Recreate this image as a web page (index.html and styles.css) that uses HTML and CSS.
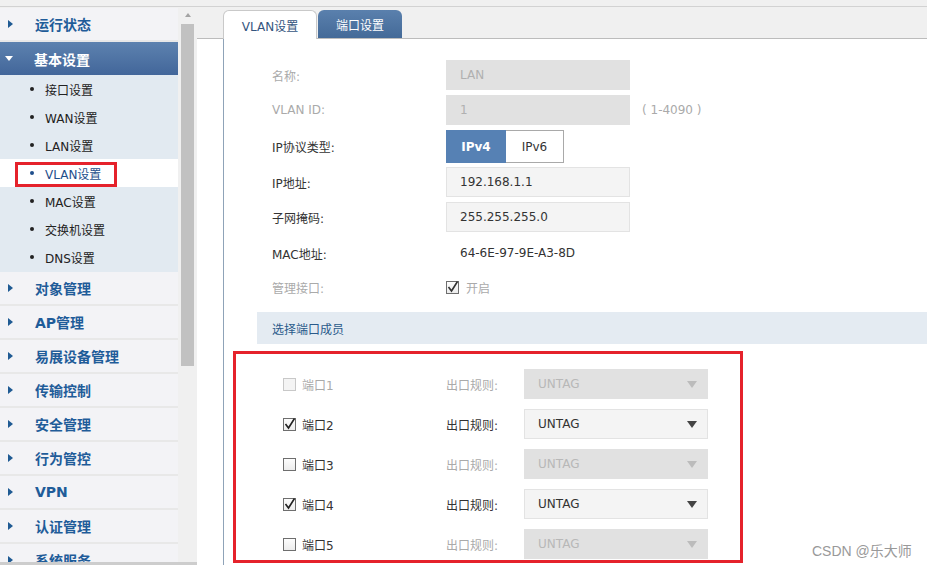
FILE: index.html
```html
<!DOCTYPE html>
<html lang="zh-CN">
<head>
<meta charset="utf-8">
<title>VLAN设置</title>
<link rel="stylesheet" href="styles.css">
</head>
<body>
<div class="topbar"></div>
<div class="frame">
  <nav class="sidebar">
    <div class="menu-item"><span class="tri-r"></span>运行状态</div>
    <div class="menu-head"><span class="tri-d"></span>基本设置</div>
    <ul class="submenu">
      <li><span class="dot"></span>接口设置</li>
      <li><span class="dot"></span>WAN设置</li>
      <li><span class="dot"></span>LAN设置</li>
      <li class="cur"><span class="dot"></span>VLAN设置</li>
      <li><span class="dot"></span>MAC设置</li>
      <li><span class="dot"></span>交换机设置</li>
      <li><span class="dot"></span>DNS设置</li>
    </ul>
    <div class="menu-item"><span class="tri-r"></span>对象管理</div>
    <div class="menu-item"><span class="tri-r"></span>AP管理</div>
    <div class="menu-item"><span class="tri-r"></span>易展设备管理</div>
    <div class="menu-item"><span class="tri-r"></span>传输控制</div>
    <div class="menu-item"><span class="tri-r"></span>安全管理</div>
    <div class="menu-item"><span class="tri-r"></span>行为管控</div>
    <div class="menu-item"><span class="tri-r"></span>VPN</div>
    <div class="menu-item"><span class="tri-r"></span>认证管理</div>
    <div class="menu-item"><span class="tri-r"></span>系统服务</div>
  </nav>
  <div class="vscroll"><span class="arrow-up"></span><span class="thumb"></span></div>
  <main class="main">
    <div class="tabbar">
      <div class="tab active">VLAN设置</div>
      <div class="tab alt">端口设置</div>
    </div>
    <div class="content">
      <div class="panel">
        <div class="form">
          <div class="row">
            <div class="label dis">名称:</div>
            <div class="field ro">LAN</div>
          </div>
          <div class="row">
            <div class="label dis">VLAN ID:</div>
            <div class="field ro">1</div>
            <div class="hint">( 1-4090 )</div>
          </div>
          <div class="row row-seg">
            <div class="label">IP协议类型:</div>
            <div class="seg"><span class="seg-on">IPv4</span><span class="seg-off">IPv6</span></div>
          </div>
          <div class="row row-ip">
            <div class="label">IP地址:</div>
            <div class="field">192.168.1.1</div>
          </div>
          <div class="row row-mask">
            <div class="label">子网掩码:</div>
            <div class="field">255.255.255.0</div>
          </div>
          <div class="row row-mac">
            <div class="label">MAC地址:</div>
            <div class="value">64-6E-97-9E-A3-8D</div>
          </div>
          <div class="row row-mgmt">
            <div class="label dis">管理接口:</div>
            <div class="check-line">
              <span class="cb on"><svg viewBox="0 0 13 13" width="13" height="13"><path d="M2.5 6 L5.5 10 L11.5 0.5" fill="none" stroke="#333" stroke-width="1.6"/></svg></span>
              <span class="dis">开启</span>
            </div>
          </div>
        </div>
        <div class="section">选择端口成员</div>
        <div class="ports">
          <div class="port">
            <div class="port-name dis"><span class="cb off-dis"></span>端口1</div>
            <div class="rule dis">出口规则:</div>
            <div class="sel sel-dis"><span>UNTAG</span><span class="caret"></span></div>
          </div>
          <div class="port">
            <div class="port-name"><span class="cb on"><svg viewBox="0 0 13 13" width="13" height="13"><path d="M2.5 6 L5.5 10 L11.5 0.5" fill="none" stroke="#222" stroke-width="1.6"/></svg></span>端口2</div>
            <div class="rule">出口规则:</div>
            <div class="sel"><span>UNTAG</span><span class="caret"></span></div>
          </div>
          <div class="port">
            <div class="port-name"><span class="cb"></span>端口3</div>
            <div class="rule dis">出口规则:</div>
            <div class="sel sel-dis"><span>UNTAG</span><span class="caret"></span></div>
          </div>
          <div class="port">
            <div class="port-name"><span class="cb on"><svg viewBox="0 0 13 13" width="13" height="13"><path d="M2.5 6 L5.5 10 L11.5 0.5" fill="none" stroke="#222" stroke-width="1.6"/></svg></span>端口4</div>
            <div class="rule">出口规则:</div>
            <div class="sel"><span>UNTAG</span><span class="caret"></span></div>
          </div>
          <div class="port">
            <div class="port-name"><span class="cb"></span>端口5</div>
            <div class="rule dis">出口规则:</div>
            <div class="sel sel-dis"><span>UNTAG</span><span class="caret"></span></div>
          </div>
        </div>
      </div>
    </div>
  </main>
</div>
<div class="hbar"></div>
<div class="mark mark-vlan"></div>
<div class="mark mark-ports"></div>
<div class="watermark">CSDN @乐大师</div>
</body>
</html>
```
FILE: styles.css
```css
* { box-sizing: border-box; }
html, body { margin: 0; padding: 0; }
body {
  width: 927px;
  height: 565px;
  overflow: hidden;
  position: relative;
  background: #f0f0f0;
  font-family: "DejaVu Sans", "Noto Sans CJK SC", sans-serif;
  font-size: 12px;
  color: #333;
}
.topbar { height: 7px; border-bottom: 1px solid #d2d2d2; background: #f0f0f0; }
.frame { display: flex; height: 555px; }

/* sidebar */
.sidebar { width: 178px; flex: none; padding-top: 1px; overflow: hidden; background: #f0f0f0; }
.menu-item {
  height: 34px;
  border-bottom: 2px solid #e8e8e8;
  background: #f3f3f6;
  display: flex;
  align-items: center;
  padding-left: 8px;
  font-weight: bold;
  font-size: 14px;
  color: #1f5c99;
  white-space: nowrap;
}
.tri-r {
  width: 0; height: 0;
  border-top: 4.5px solid transparent;
  border-bottom: 4.5px solid transparent;
  border-left: 5px solid #1f5a93;
  margin-right: 22px;
}
.menu-head {
  height: 33px;
  background: linear-gradient(#5d82af, #42669a);
  color: #fff;
  display: flex;
  align-items: center;
  padding-left: 5px;
  font-weight: bold;
  font-size: 14px;
}
.tri-d {
  width: 0; height: 0;
  border-left: 4.5px solid transparent;
  border-right: 4.5px solid transparent;
  border-top: 5px solid #fff;
  margin-right: 21px;
}
.submenu { list-style: none; margin: 0; padding: 0 0 1px; background: #e2eaf1; }
.submenu li { height: 28px; display: flex; align-items: center; padding-left: 30px; color: #222; font-size: 12px; }
.dot { width: 4px; height: 4px; border-radius: 50%; background: #222; margin-right: 11px; }
.submenu li.cur { background: #fff; color: #1f4f8c; }
.submenu li.cur .dot { background: #1f4f8c; }

/* vertical scrollbar */
.vscroll { width: 19px; flex: none; background: #f0f0f0; display: flex; flex-direction: column; align-items: center; }
.arrow-up {
  width: 0; height: 0; margin-top: 6px;
  border-left: 3.5px solid transparent;
  border-right: 3.5px solid transparent;
  border-bottom: 4px solid #a3a3a3;
}
.thumb { width: 13px; height: 342px; margin-top: 7px; background: #c1c1c1; }

/* main */
.main { flex: 1; display: flex; flex-direction: column; min-width: 0; }
.tabbar {
  height: 32px;
  padding: 3px 0 0 26px;
  border-bottom: 1px solid #bcbcbc;
  display: flex;
  align-items: flex-end;
  gap: 1px;
}
.tab { height: 28px; display: flex; align-items: center; justify-content: center; border-radius: 6px 6px 0 0; }
.tab.active {
  width: 94px; height: 29px; margin-bottom: -1px;
  background: #fff; border: 1px solid #c9c9c9; border-bottom: none;
  color: #34557e;
}
.tab.alt { width: 84px; background: linear-gradient(#5a80ad, #446a98); color: #fff; }
.content { flex: 1; background: #fff; padding-left: 26px; display: flex; }
.panel { flex: 1; border-left: 1px solid #8fa3b8; padding: 21px 0 0 33px; }

.row { display: flex; align-items: center; height: 30px; margin-bottom: 5px; }
.row-seg { height: 33px; margin-bottom: 4px; }
.row-mask { margin-bottom: 6px; }
.row-mac { margin-bottom: 4px; }
.row-mgmt { margin-bottom: 10px; }
.label { width: 189px; flex: none; padding-left: 15px; color: #333; }
.dis { color: #aaa; }
.field {
  width: 184px; height: 30px;
  padding-left: 13px;
  display: flex; align-items: center;
  background: #f4f4f4; border: 1px solid #e3e3e3;
  color: #333;
}
.field.ro { background: #e1e1e1; border-color: #e1e1e1; color: #b0b0b0; }
.hint { margin-left: 12px; color: #aaa; }
.value { padding-left: 14px; color: #333; }
.seg { display: flex; height: 33px; }
.seg-on { width: 60px; display: flex; align-items: center; justify-content: center; background: #5681b4; color: #fff; font-weight: bold; }
.seg-off { width: 58px; display: flex; align-items: center; justify-content: center; background: #fff; border: 1px solid #a9a9a9; border-left: none; color: #333; }
.check-line { display: flex; align-items: center; gap: 7px; }

.cb {
  width: 13px; height: 13px; flex: none;
  border: 1px solid #6e6e6e;
  background: linear-gradient(#fdfdfd, #ececec);
  position: relative;
}
.cb svg { position: absolute; left: -1px; top: -1px; overflow: visible; }
.cb.off-dis { border-color: #c8c8c8; background: #f4f4f4; }

.section {
  height: 32px;
  background: #e4ebf2;
  display: flex; align-items: center;
  padding-left: 15px;
  color: #2a5a8a;
  margin-bottom: 25px;
}
.port { display: flex; align-items: center; height: 30px; margin-bottom: 10px; }
.port-name { width: 189px; flex: none; padding-left: 26px; display: flex; align-items: center; gap: 6px; color: #333; }
.port-name.dis { color: #aaa; }
.rule { width: 78px; flex: none; color: #333; }
.rule.dis { color: #aaa; }
.sel {
  width: 184px; height: 30px;
  padding: 0 10px 0 13px;
  display: flex; align-items: center; justify-content: space-between;
  background: #f4f4f4; border: 1px solid #e3e3e3;
  color: #333;
}
.caret {
  width: 0; height: 0;
  border-left: 5px solid transparent;
  border-right: 5px solid transparent;
  border-top: 7px solid #444;
}
.sel-dis { background: #e1e1e1; border-color: #e1e1e1; color: #b8b8b8; }
.sel-dis .caret { border-top-color: #bcbcbc; }

.hbar { height: 3px; background: #cdcdcd; }

/* annotations */
.mark { position: absolute; border: 3px solid #e5222b; }
.mark-vlan { left: 15px; top: 162px; width: 102px; height: 25px; }
.mark-ports { left: 233px; top: 351px; width: 510px; height: 212px; }
.watermark {
  position: absolute; left: 812px; top: 540px;
  font-family: "Liberation Sans", "Noto Sans CJK SC", sans-serif;
  font-size: 14px; color: #999;
}
```
